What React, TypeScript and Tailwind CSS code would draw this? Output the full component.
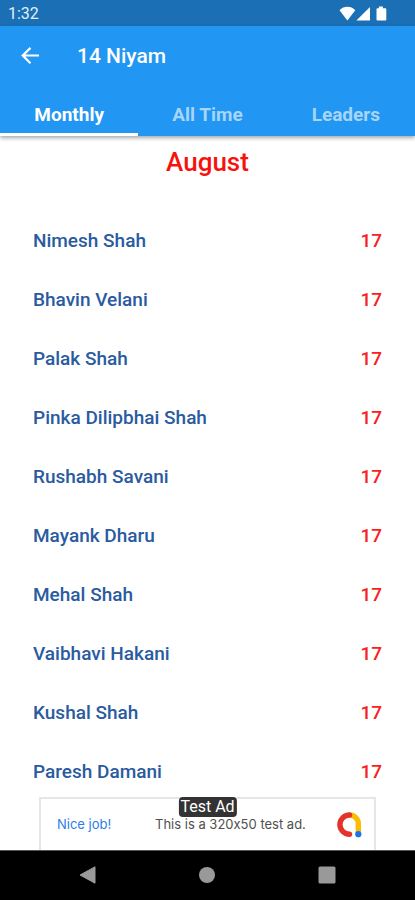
import { useState } from 'react';

const TABS = ['Monthly', 'All Time', 'Leaders'];

const MEMBERS = [
  { name: 'Nimesh Shah', score: 17 },
  { name: 'Bhavin Velani', score: 17 },
  { name: 'Palak Shah', score: 17 },
  { name: 'Pinka Dilipbhai Shah', score: 17 },
  { name: 'Rushabh Savani', score: 17 },
  { name: 'Mayank Dharu', score: 17 },
  { name: 'Mehal Shah', score: 17 },
  { name: 'Vaibhavi Hakani', score: 17 },
  { name: 'Kushal Shah', score: 17 },
  { name: 'Paresh Damani', score: 17 },
];

function StatusBar() {
  return (
    <div className="flex h-[26px] shrink-0 items-center justify-between bg-[#1a6fb5] pt-0.5 pr-7 pl-2 text-base text-[#e3eef7]">
      <span>1:32</span>
      <svg width="48" height="16" viewBox="0 0 48 16" fill="#fff" aria-hidden="true">
        <path d="M0.5 4.2C4.8-0.3 12-0.3 16.3 4.2L8.4 14.4Z" />
        <path d="M31 1V14.4H17.4Z" />
        <path d="M39.9 0.6h4v1.6h2.4q1 0 1 1v10.2q0 1-1 1h-7.8q-1 0-1-1v-10.2q0-1 1-1h1.4z" />
      </svg>
    </div>
  );
}

function Header({ active, onSelect }: { active: string; onSelect: (tab: string) => void }) {
  return (
    <header className="z-10 shrink-0 bg-[#2196f3] text-white shadow-[0_2px_4px_rgba(0,0,0,0.35)]">
      <div className="flex h-[62px] items-center gap-9 px-5">
        <button type="button" aria-label="Back">
          <svg width="21" height="20" viewBox="0 0 21 20" fill="none" stroke="currentColor" strokeWidth="2.2" aria-hidden="true">
            <path d="M19 8.5H3.5M10.5 0.9L2.7 8.5l7.8 7.8" />
          </svg>
        </button>
        <h1 className="text-[21px] font-medium">14 Niyam</h1>
      </div>
      <div role="tablist" className="grid h-12 grid-cols-3">
        {TABS.map((tab) => (
          <button
            key={tab}
            type="button"
            role="tab"
            aria-selected={tab === active}
            onClick={() => onSelect(tab)}
            className={
              tab === active
                ? 'border-b-3 border-white pt-2.5 text-[19px] font-bold'
                : 'border-b-3 border-transparent pt-2.5 text-[19px] font-bold text-[#a6d5fa]'
            }
          >
            {tab}
          </button>
        ))}
      </div>
    </header>
  );
}

function AdBanner() {
  return (
    <aside className="relative mx-[39px] flex h-[53px] shrink-0 items-center border-x-2 border-t-2 border-[#e4e6e8] bg-white px-4 font-[Inter,sans-serif] text-[13px] [font-feature-settings:'calt'_0]">
      <a href="#ad" className="w-[98px] text-[#2b7de9]">
        Nice job!
      </a>
      <span className="text-[#505050]">This is a 320x50 test ad.</span>
      <svg className="-mr-1 ml-auto shrink-0" width="26" height="26" viewBox="0 0 26 26" fill="none" aria-hidden="true">
        <path d="M13.5 3A8.8 8.8 0 0 1 22.3 12V22" stroke="#fbbc04" strokeWidth="5.4" />
        <path d="M13.5 3A9.6 9.6 0 0 0 13.5 22.2" stroke="#e4332b" strokeWidth="5.4" strokeLinecap="round" />
        <circle cx="22.3" cy="22.2" r="3.1" fill="#1a73e8" />
      </svg>
      <span className="absolute -top-0.5 left-1/2 -translate-x-1/2 rounded-sm bg-[#333] px-0.5 font-[Roboto,sans-serif] text-base leading-5 whitespace-nowrap text-white">
        Test Ad
      </span>
    </aside>
  );
}

function NavBar() {
  return (
    <nav className="flex h-[50px] shrink-0 items-center justify-around border-t border-[#555] bg-black px-7 pb-px text-[#999]">
      <button type="button" aria-label="Back">
        <svg width="18" height="18" viewBox="0 0 18 18" fill="currentColor" aria-hidden="true">
          <path d="M1 9L16 0.8V17.2Z" stroke="currentColor" strokeLinejoin="round" />
        </svg>
      </button>
      <button type="button" aria-label="Home">
        <svg width="18" height="18" viewBox="0 0 18 18" fill="currentColor" aria-hidden="true">
          <circle cx="9" cy="9" r="8" />
        </svg>
      </button>
      <button type="button" aria-label="Recent apps">
        <svg width="18" height="18" viewBox="0 0 18 18" fill="currentColor" aria-hidden="true">
          <rect x="0.5" y="0.5" width="17" height="17" rx="1.5" />
        </svg>
      </button>
    </nav>
  );
}

export default function App() {
  const [active, setActive] = useState('Monthly');

  return (
    <div className="flex h-screen flex-col bg-white font-[Roboto,sans-serif]">
      <StatusBar />
      <Header active={active} onSelect={setActive} />
      <main className="min-h-0 flex-1 overflow-hidden">
        <h2 className="mt-2.5 mb-[34px] text-center text-[26px] leading-8 font-medium text-[#f8120d]">August</h2>
        <ul>
          {MEMBERS.map((m) => (
            <li key={m.name} className="flex h-[59px] items-center justify-between px-[33px] text-[19px] font-medium">
              <span className="text-[#2a5ba0]">{m.name}</span>
              <span className="text-[#f8221d]">{m.score}</span>
            </li>
          ))}
        </ul>
      </main>
      <AdBanner />
      <NavBar />
    </div>
  );
}
